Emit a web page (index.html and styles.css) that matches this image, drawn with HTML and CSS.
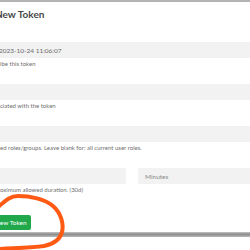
FILE: index.html
```html
<!DOCTYPE html>
<html lang="en">
<head>
    <meta charset="UTF-8">
    <meta name="viewport" content="width=device-width, initial-scale=1.0">
    <title>New Token</title>
    <link rel="stylesheet" href="styles.css">
</head>
<body>

    <div class="modal">
        <div class="modal-body">
            <h2 class="title">New Token</h2>

            <div class="field">
                <input type="text" class="input" value="2023-10-24 11:06:07">
                <p class="help">ibe this token</p>
            </div>

            <div class="field">
                <input type="text" class="input">
                <p class="help">ciated with the token</p>
            </div>

            <div class="field">
                <input type="text" class="input">
                <p class="help">ed roles/groups. Leave blank for: all current user roles.</p>
            </div>

            <div class="field">
                <div class="row">
                    <input type="text" class="input">
                    <input type="text" class="input" placeholder="Minutes">
                </div>
                <p class="help">oximum allowed duration. (30d)</p>
            </div>

            <button class="btn-create">New Token</button>
        </div>
        <div class="modal-edge"></div>
    </div>

    <!-- hand-drawn highlight over the button -->
    <svg class="scribble" width="250" height="250" viewBox="0 0 250 250">
        <path d="M-2 207 C5 201, 10 196, 18 196 C30 196, 45 199, 53 206 C61 213, 64 224, 62 232 C60 240, 54 244, 44 246 C30 248, 15 248, -2 249"
              fill="none" stroke="#ff5a14" stroke-width="4" stroke-linecap="round"/>
    </svg>

</body>
</html>
```

FILE: styles.css
```css
body {
    margin: 0;
    background: #fff;
    font-family: Lato, "Open Sans", sans-serif;
    overflow: hidden;
    width: 250px;
    height: 250px;
}
.modal {
    border-top: 2px solid #b3b3b3;
}
.modal-body {
    width: 280px;
    margin-left: -8px;
    padding-top: 6px;
}
.title {
    margin: 0 0 22px 3px;
    font-size: 10px;
    line-height: 12px;
    font-weight: 700;
    color: #474747;
}
.field {
    margin-bottom: 16px;
}
.input {
    display: block;
    box-sizing: border-box;
    width: 100%;
    height: 16px;
    margin: 0;
    padding: 0 7px;
    border: none;
    border-radius: 2px;
    background: #f2f2f2;
    font-family: inherit;
    font-size: 6.5px;
    color: #6a6a6a;
    outline: none;
}
.input::placeholder {
    color: #8a8a8a;
}
.row {
    display: grid;
    grid-template-columns: 1fr 1fr;
    gap: 12px;
}
.help {
    margin: 2px 0 0 8px;
    font-size: 6px;
    line-height: 8px;
    color: #6f6f6f;
}
.btn-create {
    display: block;
    height: 15px;
    margin: 21px 0 2px -3px;
    padding: 0 4px 0 6px;
    border: none;
    border-radius: 2px;
    background: #20a84b;
    color: #fff;
    font-family: inherit;
    font-size: 6.5px;
}
.modal-edge {
    height: 5px;
    background: linear-gradient(#c4c4c4, #8c8c8c 45%, #b8b8b8);
}
.scribble {
    position: absolute;
    left: 0;
    top: 0;
}
```
